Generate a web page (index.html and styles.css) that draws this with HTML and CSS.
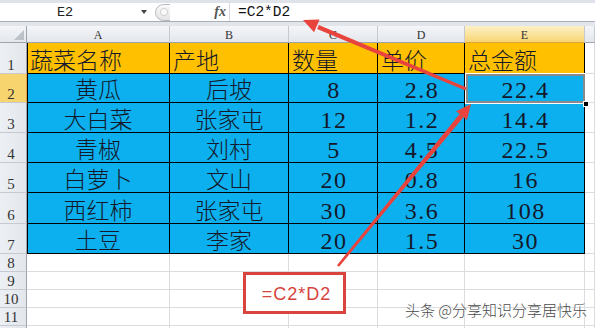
FILE: index.html
```html
<!DOCTYPE html>
<html lang="zh-CN">
<head>
<meta charset="utf-8">
<title>蔬菜总金额</title>
<link rel="stylesheet" href="styles.css">
</head>
<body>
<div class="app">
  <div class="topstrip"></div>
  <div class="fbar">
    <div class="namebox">E2</div>
    <div class="dd"><span class="tri"></span></div>
    <div class="grip">
      <svg width="15" height="17" viewBox="0 0 15 17">
        <defs>
          <linearGradient id="gg" x1="0" y1="0" x2="0" y2="1">
            <stop offset="0" stop-color="#fbfbfb"/>
            <stop offset="1" stop-color="#e2e2e2"/>
          </linearGradient>
        </defs>
        <path d="M15 0.5 H8.5 A8 8 0 0 0 8.5 16.5 H15" fill="url(#gg)" stroke="#b9b9b9"/>
        <circle cx="9" cy="8" r="3.6" fill="#fafafa" stroke="#cfcfcf"/>
      </svg>
    </div>
    <div class="fxzone"><span class="fx">fx</span></div>
    <div class="formula">=C2*D2</div>
  </div>
  <div class="gap"></div>
  <div class="sheet">
    <div class="corner"><svg width="26" height="16" viewBox="0 0 26 16"><polygon points="24,4 24,14 14,14" fill="#bcc1c8"/></svg></div>
    <div class="ch">A</div><div class="ch">B</div><div class="ch">C</div><div class="ch">D</div><div class="ch sel">E</div><div class="ch"></div>

    <div class="rh">1</div>
    <div class="c o a">蔬菜名称</div><div class="c o">产地</div><div class="c o">数量</div><div class="c o">单价</div><div class="c o">总金额</div><div class="c"></div>

    <div class="rh sel">2</div>
    <div class="c b a">黄瓜</div><div class="c b">后坡</div><div class="c b n">8</div><div class="c b n">2.8</div><div class="c b n cur">22.4<span class="selbox"><span class="handle"></span></span></div><div class="c"></div>

    <div class="rh">3</div>
    <div class="c b a">大白菜</div><div class="c b">张家屯</div><div class="c b n">12</div><div class="c b n">1.2</div><div class="c b n">14.4</div><div class="c"></div>

    <div class="rh">4</div>
    <div class="c b a">青椒</div><div class="c b">刘村</div><div class="c b n">5</div><div class="c b n">4.5</div><div class="c b n">22.5</div><div class="c"></div>

    <div class="rh">5</div>
    <div class="c b a">白萝卜</div><div class="c b">文山</div><div class="c b n">20</div><div class="c b n">0.8</div><div class="c b n">16</div><div class="c"></div>

    <div class="rh">6</div>
    <div class="c b a">西红柿</div><div class="c b">张家屯</div><div class="c b n">30</div><div class="c b n">3.6</div><div class="c b n">108</div><div class="c"></div>

    <div class="rh">7</div>
    <div class="c b a">土豆</div><div class="c b">李家</div><div class="c b n">20</div><div class="c b n">1.5</div><div class="c b n">30</div><div class="c"></div>

    <div class="rh">8</div><div class="c"></div><div class="c"></div><div class="c"></div><div class="c"></div><div class="c"></div><div class="c"></div>
    <div class="rh">9</div><div class="c"></div><div class="c"></div><div class="c"></div><div class="c"></div><div class="c"></div><div class="c"></div>
    <div class="rh">10</div><div class="c"></div><div class="c"></div><div class="c"></div><div class="c"></div><div class="c"></div><div class="c"></div>
    <div class="rh">11</div><div class="c"></div><div class="c"></div><div class="c"></div><div class="c"></div><div class="c"></div><div class="c"></div>
    <div class="rh"></div><div class="c"></div><div class="c"></div><div class="c"></div><div class="c"></div><div class="c"></div><div class="c"></div>
  </div>

  <svg class="arrows" width="595" height="328" viewBox="0 0 595 328">
    <polygon points="466.6,87.6 318.9,25.0 317.1,29.0 465.4,90.4" fill="#e8443d"/>
    <polygon points="303,20 319.5,19.4 314.1,32.3" fill="#e8443d"/>
    <polygon points="339.0,266.8 463.4,117.2 459.6,114.0 337.0,265.2" fill="#e8443d"/>
    <polygon points="471,104 466.9,120.0 456.1,111.2" fill="#e8443d"/>
  </svg>

  <div class="callout">=C2*D2</div>
  <div class="wm">头条 @分享知识分享居快乐</div>
</div>
</body>
</html>
```

FILE: styles.css
```css
* { box-sizing: border-box; margin: 0; padding: 0; }
html, body { width: 595px; height: 328px; overflow: hidden; background: #fff; }
body { font-family: "Noto Sans CJK SC", sans-serif; color: #111; }

.app { position: relative; width: 595px; height: 328px; overflow: hidden; }

.topstrip { height: 3px; background: #dfe3e9; }

.fbar {
  display: flex;
  height: 19px;
  border-bottom: 1px solid #a7aeb7;
  background: #fff;
}
.namebox {
  width: 130px;
  display: flex; align-items: center; justify-content: center;
  font: 13.5px "Liberation Mono", monospace;
  color: #222;
}
.dd {
  width: 24px;
  display: flex; align-items: center; justify-content: flex-end;
  padding-right: 7px;
}
.tri {
  width: 0; height: 0;
  border-left: 3px solid transparent;
  border-right: 3px solid transparent;
  border-top: 4px solid #444;
}
.grip { width: 16px; padding-left: 1px; display: flex; align-items: center; }
.grip svg { display: block; }
.fxzone {
  width: 59px;
  display: flex; align-items: center; justify-content: flex-end;
  padding-right: 3px;
}
.fx { font: italic bold 14px "Liberation Serif", serif; color: #555; }
.formula {
  flex: 1;
  border-left: 1px solid #d5d8dc;
  display: flex; align-items: center;
  padding-left: 8px;
  font: 14.5px "Liberation Mono", monospace;
  color: #111;
}

.gap { height: 4px; background: #e2e5ea; }

.sheet {
  display: grid;
  grid-template-columns: 27px 143px 119px 89px 87px 120px 1fr;
  grid-template-rows: 17px 31px 29px 30px 30px 30px 31px 30px 18px 18px 18px 18px 18px;
}

.corner {
  background: linear-gradient(#f3f5f8, #e4e7ec);
  border-right: 1px solid #9ea4ad;
  border-bottom: 1px solid #9ea4ad;
}
.corner svg { display: block; }

.ch {
  background: linear-gradient(#f4f6f9, #e3e6eb);
  border-right: 1px solid #c6cad0;
  border-bottom: 1px solid #9ea4ad;
  display: flex; align-items: flex-end; justify-content: center;
  font: 12px/12px "Liberation Serif", serif;
  padding-bottom: 1px;
  color: #333;
}
.ch.sel {
  background: linear-gradient(#fdf1c6, #f8d574);
  border-bottom-color: #e2a43c;
}

.rh {
  background: linear-gradient(90deg, #eceff3, #e3e6eb);
  border-right: 1px solid #9ea4ad;
  border-bottom: 1px solid #c6cad0;
  display: flex; align-items: flex-end; justify-content: center;
  padding-right: 4px;
  font: 15px/15px "Liberation Serif", serif;
  color: #333;
}
.rh.sel {
  background: #f7d46e;
  border-right-color: #e2a43c;
}

.c {
  border-right: 1px solid #dadcdf;
  border-bottom: 1px solid #dadcdf;
  display: flex; align-items: flex-end; justify-content: center;
  font-size: 23px;
  font-weight: 300;
  line-height: 27px;
  color: #14182a;
  white-space: nowrap;
}
.c.o {
  background: #ffc000;
  border-color: #000;
  justify-content: flex-start;
  padding-left: 3px;
}
.c.b {
  background: #0cb0ee;
  border-color: #000;
}
.c.a { box-shadow: inset 1px 0 0 #000; }
.c.n {
  font-family: "Liberation Serif", serif;
  font-weight: 400;
  font-size: 24px;
  line-height: 24px;
  letter-spacing: 1.5px;
  padding-left: 2px;
}

.cur { position: relative; }
.selbox {
  position: absolute;
  top: -1px; left: 0; right: -2px; bottom: -2px;
  border: 1px solid #fff;
  box-shadow: inset 0 0 0 2px #8a8a8a;
}
.handle {
  position: absolute;
  right: -4px; bottom: -4px;
  width: 6px; height: 6px;
  background: #000;
  border: 1px solid #fff;
}

.arrows { position: absolute; left: 0; top: 0; pointer-events: none; }

.callout {
  position: absolute;
  left: 243px; top: 272px;
  width: 103px; height: 42px;
  border: 3px solid #d9443e;
  background: #fff;
  display: flex; align-items: center; justify-content: center;
  font: 18px "Liberation Sans", sans-serif;
  letter-spacing: 1px;
  color: #d6443e;
  padding-top: 2px;
  padding-left: 4px;
}

.wm {
  position: absolute;
  right: 8px; top: 301px;
  font-size: 15px;
  font-weight: 300;
  line-height: 18px;
  color: #4a4a4a;
  text-shadow: 0 0 2px #fff, 0 0 1px #fff;
  white-space: nowrap;
}
```
